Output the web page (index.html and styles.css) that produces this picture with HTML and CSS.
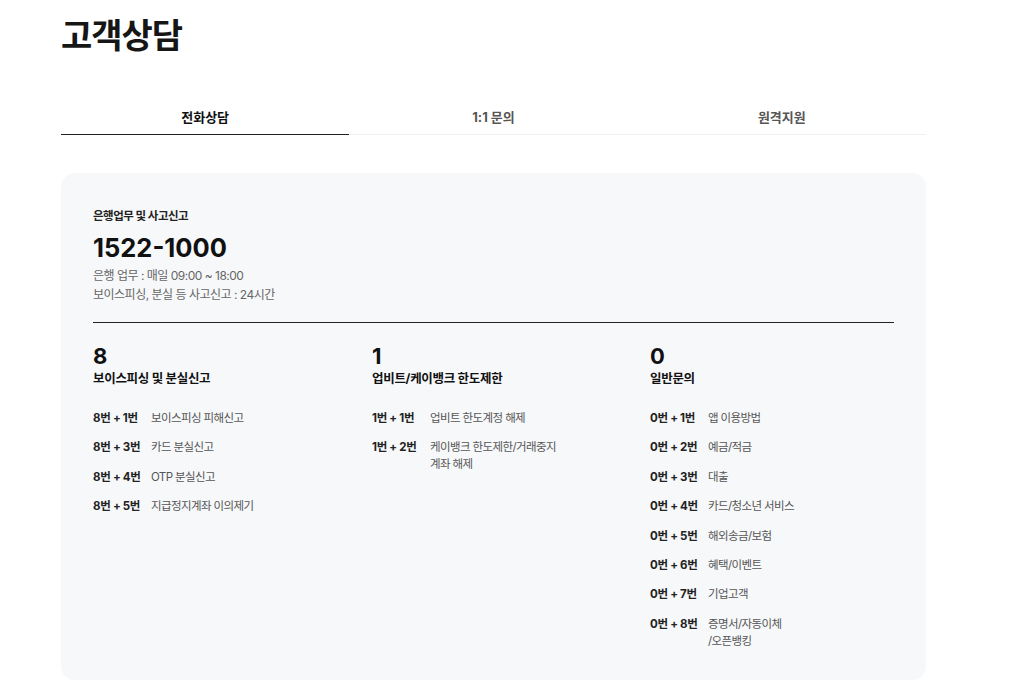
FILE: index.html
```html
<!DOCTYPE html>
<html lang="ko">
<head>
<meta charset="utf-8">
<link rel="stylesheet" href="styles.css">
</head>
<body>
<div class="page">
  <h1 class="title">고객상담</h1>
  <nav class="tabs">
    <div class="tab active">전화상담</div>
    <div class="tab">1:1 문의</div>
    <div class="tab">원격지원</div>
  </nav>
  <section class="card">
    <div class="label">은행업무 및 사고신고</div>
    <div class="phone">1522-1000</div>
    <div class="info">은행 업무 : 매일 09:00 ~ 18:00</div>
    <div class="info">보이스피싱, 분실 등 사고신고 : 24시간</div>
    <div class="divider"></div>
    <div class="cols">
      <div class="col">
        <div class="num">8</div>
        <div class="col-title">보이스피싱 및 분실신고</div>
        <ul class="rows">
          <li class="row"><span class="key">8번 + 1번</span><span class="desc">보이스피싱 피해신고</span></li>
          <li class="row"><span class="key">8번 + 3번</span><span class="desc">카드 분실신고</span></li>
          <li class="row"><span class="key">8번 + 4번</span><span class="desc">OTP 분실신고</span></li>
          <li class="row"><span class="key">8번 + 5번</span><span class="desc">지급정지계좌 이의제기</span></li>
        </ul>
      </div>
      <div class="col">
        <div class="num">1</div>
        <div class="col-title">업비트/케이뱅크 한도제한</div>
        <ul class="rows">
          <li class="row"><span class="key">1번 + 1번</span><span class="desc">업비트 한도계정 해제</span></li>
          <li class="row"><span class="key">1번 + 2번</span><span class="desc">케이뱅크 한도제한/거래중지<br>계좌 해제</span></li>
        </ul>
      </div>
      <div class="col">
        <div class="num">0</div>
        <div class="col-title">일반문의</div>
        <ul class="rows">
          <li class="row"><span class="key">0번 + 1번</span><span class="desc">앱 이용방법</span></li>
          <li class="row"><span class="key">0번 + 2번</span><span class="desc">예금/적금</span></li>
          <li class="row"><span class="key">0번 + 3번</span><span class="desc">대출</span></li>
          <li class="row"><span class="key">0번 + 4번</span><span class="desc">카드/청소년 서비스</span></li>
          <li class="row"><span class="key">0번 + 5번</span><span class="desc">해외송금/보험</span></li>
          <li class="row"><span class="key">0번 + 6번</span><span class="desc">혜택/이벤트</span></li>
          <li class="row"><span class="key">0번 + 7번</span><span class="desc">기업고객</span></li>
          <li class="row"><span class="key">0번 + 8번</span><span class="desc">증명서/자동이체<br>/오픈뱅킹</span></li>
        </ul>
      </div>
    </div>
  </section>
</div>
</body>
</html>
```
FILE: styles.css
```css
html, body {
  margin: 0;
  padding: 0;
  background: #fff;
}
body {
  font-family: "Inter", "Noto Sans CJK KR", sans-serif;
  color: #1a1a1a;
}
.page {
  width: 865px;
  margin-left: 61px;
  padding-top: 12px;
}
.title {
  margin: 0;
  font-size: 34px;
  line-height: 48px;
  font-weight: 700;
  letter-spacing: -1px;
  color: #161616;
}
.tabs {
  display: flex;
  margin-top: 40px;
  border-bottom: 1px solid #f0f0f2;
}
.tab {
  flex: 1;
  text-align: center;
  font-size: 13px;
  font-weight: 700;
  line-height: 20px;
  padding: 7px 0 7px;
  color: #555;
  margin-bottom: -1px;
  border-bottom: 1px solid transparent;
}
.tab.active {
  color: #111;
  border-bottom: 1px solid #222;
}
.card {
  margin-top: 38px;
  background: #f7f8fa;
  border-radius: 14px;
  padding: 33px 32px 30px;
}
.label {
  font-size: 11.5px;
  font-weight: 700;
  line-height: 20px;
  color: #222;
  letter-spacing: -0.5px;
}
.phone {
  margin-top: 6px;
  font-size: 25.5px;
  font-weight: 700;
  line-height: 32px;
  color: #111;
}
.info {
  font-size: 12px;
  line-height: 19px;
  color: #666;
  letter-spacing: -0.5px;
}
.phone + .info {
  margin-top: 2px;
}
.divider {
  margin-top: 18px;
  height: 1px;
  background: #222;
}
.cols {
  display: grid;
  grid-template-columns: 279px 278px 243px;
  margin-top: 20px;
}
.num {
  font-size: 22px;
  font-weight: 700;
  line-height: 26px;
  color: #111;
}
.col-title {
  font-size: 12.5px;
  font-weight: 700;
  line-height: 20px;
  color: #111;
  letter-spacing: -0.3px;
}
.rows {
  list-style: none;
  margin: 21px 0 0;
  padding: 0;
  display: flex;
  flex-direction: column;
  gap: 12.4px;
}
.row {
  display: flex;
  font-size: 11.5px;
  line-height: 17px;
}
.key {
  flex: 0 0 58px;
  font-weight: 700;
  color: #222;
  letter-spacing: -0.3px;
}
.desc {
  color: #555;
  letter-spacing: -0.6px;
}
```
